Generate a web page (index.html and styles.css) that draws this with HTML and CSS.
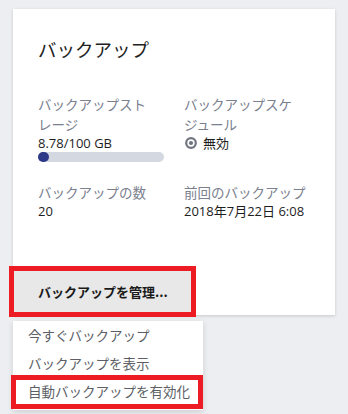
FILE: index.html
```html
<!DOCTYPE html>
<html lang="ja">
<head>
<meta charset="utf-8">
<link rel="stylesheet" href="styles.css">
</head>
<body>
<div class="card">
  <div class="card-body">
    <h1 class="title">バックアップ</h1>
    <div class="grid">
      <div class="cell">
        <div class="label">バックアップストレージ</div>
        <div class="value">8.78/100 GB</div>
        <div class="bar"><div class="fill" style="width:9%"></div></div>
      </div>
      <div class="cell">
        <div class="label">バックアップスケジュール</div>
        <div class="value radio-row">
          <svg class="radio" width="12" height="12" viewBox="0 0 12 12"><circle cx="6" cy="6" r="4.8" fill="none" stroke="#6f7480" stroke-width="2.2"/><circle cx="6" cy="6" r="2.1" fill="#6f7480"/></svg>
          <span>無効</span>
        </div>
      </div>
      <div class="cell">
        <div class="label">バックアップの数</div>
        <div class="value">20</div>
      </div>
      <div class="cell">
        <div class="label">前回のバックアップ</div>
        <div class="value">2018年7月22日 6:08</div>
      </div>
    </div>
  </div>
  <div class="manage">バックアップを管理...</div>
</div>
<ul class="menu">
  <li class="menu-item">今すぐバックアップ</li>
  <li class="menu-item">バックアップを表示</li>
  <li class="menu-item highlighted">自動バックアップを有効化</li>
</ul>
</body>
</html>
```

FILE: styles.css
```css
html, body {
  margin: 0;
  padding: 0;
}
body {
  background: #eceef1;
  font-family: "Open Sans", "Noto Sans CJK JP", sans-serif;
  color: #222;
  width: 348px;
  height: 414px;
  overflow: hidden;
}
.card {
  margin: 9px 13px 0 13px;
  background: #fff;
  box-shadow: 0 1px 3px rgba(0, 0, 0, 0.16);
  padding-bottom: 3px;
}
.card-body {
  padding: 26px 25px 0 25px;
}
.title {
  margin: 0;
  font-family: "Noto Sans CJK JP", sans-serif;
  font-weight: 400;
  font-size: 18.5px;
  line-height: 28px;
  color: #222;
}
.grid {
  margin-top: 31px;
  display: grid;
  grid-template-columns: 126px 126px;
  column-gap: 20px;
  row-gap: 20px;
}
.label {
  font-family: "Noto Sans CJK JP", sans-serif;
  font-size: 13.5px;
  line-height: 20px;
  color: #7a808e;
  line-break: strict;
}
.value {
  font-family: "Open Sans", "Noto Sans CJK JP", sans-serif;
  font-size: 13px;
  line-height: 18px;
  color: #1e1e1e;
}
.radio-row {
  display: flex;
  align-items: center;
  gap: 6px;
}
.radio {
  margin-left: 1px;
}
.bar {
  height: 10px;
  border-radius: 5px;
  background: #d4d8e0;
}
.fill {
  height: 10px;
  min-width: 10px;
  border-radius: 5px;
  background: #2c3a88;
}
.manage {
  margin: 51px 0 0 1px;
  width: 177px;
  height: 41px;
  box-sizing: border-box;
  padding-left: 24px;
  background: #e8e8e8;
  outline: 5px solid #ed1c24;
  font-family: "Noto Sans CJK JP", sans-serif;
  font-weight: 700;
  font-size: 13px;
  line-height: 41px;
  color: #1a1a1a;
}
.menu {
  list-style: none;
  margin: 6px 0 0 13px;
  padding: 0 0 5px 0;
  width: 190px;
  background: #fff;
  box-shadow: 0 2px 6px rgba(0, 0, 0, 0.14);
}
.menu-item {
  position: relative;
  height: 28px;
  line-height: 28px;
  padding-left: 15px;
  font-family: "Noto Sans CJK JP", sans-serif;
  font-size: 13.5px;
  color: #5c5f66;
}
.highlighted::after {
  content: "";
  position: absolute;
  left: -2px;
  right: 0;
  top: -2px;
  bottom: -4px;
  border: 5px solid #ed1c24;
}
```
